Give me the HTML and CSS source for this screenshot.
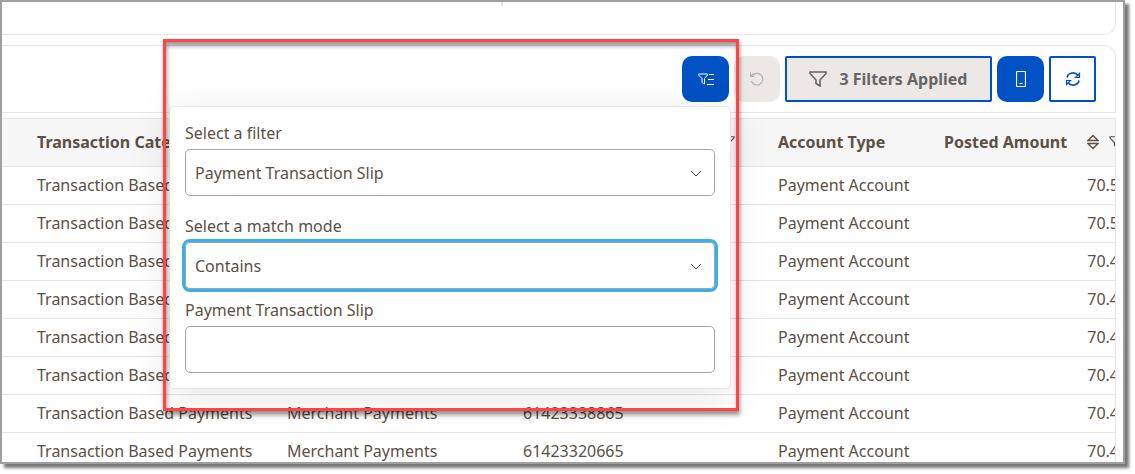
FILE: index.html
```
<!DOCTYPE html>
<html lang="en">
<head>
    <meta charset="UTF-8">
    <meta name="viewport" content="width=device-width, initial-scale=1.0">
    <title>Transactions</title>
    <link rel="stylesheet" href="styles.css">
</head>
<body>
    <svg class="sprite" aria-hidden="true">
        <symbol id="funnel" viewBox="0 0 18 16">
            <path d="M1 1h16v1.500L11 9v6L7 12.500V9L1 2.500z" stroke-width="1.6"/>
        </symbol>
        <symbol id="chevron" viewBox="0 0 12 7">
            <path d="M1 1l5 5 5-5"/>
        </symbol>
    </svg>

    <div class="window">
        <section class="card summary">
            <div class="summary-part"></div>
        </section>

        <section class="card toolbar">
            <div class="filter-menu">
                <button class="btn btn-primary" type="button" aria-label="Filter list">
                    <svg class="icon" width="16" height="12" viewBox="0 0 16 12">
                        <path d="M.5 1h9v1L6.500 5.500v5.500L4 9.500v-4L.5 2z"/>
                        <path d="M11 1.500h5M10 6.500h6M9 11.500h7"/>
                    </svg>
                </button>

                <form class="popup">
                    <label for="filter">Select a filter</label>
                    <div class="select">
                        <select id="filter">
                            <option>Payment Transaction Slip</option>
                        </select>
                        <svg class="icon chevron"><use href="#chevron"/></svg>
                    </div>

                    <label class="mode-label" for="mode">Select a match mode</label>
                    <div class="select">
                        <select id="mode" class="active">
                            <option>Contains</option>
                        </select>
                        <svg class="icon chevron"><use href="#chevron"/></svg>
                    </div>

                    <label class="slip-label" for="slip">Payment Transaction Slip</label>
                    <input id="slip" type="text">
                </form>

                <div class="highlight"></div>
            </div>

            <button class="btn btn-disabled" type="button" aria-label="Undo" disabled>
                <svg class="icon" width="14" height="14" viewBox="0 0 14 14">
                    <path d="M2.500 3.500A5.800 5.800 0 1 1 1.500 9" stroke-width="1.2"/>
                    <path d="M.5.500v4h4M.5 4.500l3-3" stroke-width="1.2"/>
                </svg>
            </button>

            <button class="btn btn-filters" type="button">
                <svg class="icon funnel-big"><use href="#funnel"/></svg>
                3 Filters Applied
            </button>

            <button class="btn btn-primary" type="button" aria-label="Mobile view">
                <svg class="icon" width="10" height="16" viewBox="0 0 10 16">
                    <rect x=".5" y=".5" width="9" height="15" rx="1" stroke-width="1.2"/>
                    <path d="M3.500 12.500h3"/>
                </svg>
            </button>

            <button class="btn btn-outline" type="button" aria-label="Refresh">
                <svg class="icon" width="16" height="14" viewBox="0 0 16 14">
                    <path d="M2 5.500a6 5.500 0 0 1 11-2M14 8.500a6 5.500 0 0 1-11 2" stroke-width="1.600"/>
                    <path d="M14.500 1.500v4H10.500zM1.500 12.500v-4H5.500z" stroke-width="1.200"/>
                </svg>
            </button>
        </section>

        <section class="card table-card">
            <table>
                <colgroup>
                    <col class="col-category">
                    <col class="col-type">
                    <col class="col-slip">
                    <col class="col-account">
                    <col class="col-amount">
                </colgroup>
                <thead>
                    <tr>
                        <th>Transaction Category</th>
                        <th></th>
                        <th><div class="head head-end"><svg class="icon funnel"><use href="#funnel"/></svg></div></th>
                        <th>Account Type</th>
                        <th>
                            <div class="head">
                                Posted Amount
                                <svg class="icon sort" width="12" height="16" viewBox="0 0 12 16">
                                    <path d="M6 1.500L1 6.500h10zM6 14.500L1 9.500h10z" stroke-width="1.400"/>
                                </svg>
                                <svg class="icon funnel"><use href="#funnel"/></svg>
                            </div>
                        </th>
                    </tr>
                </thead>
                <tbody>
                    <tr><td>Transaction Based Payments</td><td></td><td></td><td>Payment Account</td><td>70.5</td></tr>
                    <tr><td>Transaction Based Payments</td><td></td><td></td><td>Payment Account</td><td>70.5</td></tr>
                    <tr><td>Transaction Based Payments</td><td></td><td></td><td>Payment Account</td><td>70.4</td></tr>
                    <tr><td>Transaction Based Payments</td><td></td><td></td><td>Payment Account</td><td>70.4</td></tr>
                    <tr><td>Transaction Based Payments</td><td></td><td></td><td>Payment Account</td><td>70.4</td></tr>
                    <tr><td>Transaction Based Payments</td><td></td><td></td><td>Payment Account</td><td>70.4</td></tr>
                    <tr><td>Transaction Based Payments</td><td>Merchant Payments</td><td>61423338865</td><td>Payment Account</td><td>70.4</td></tr>
                    <tr><td>Transaction Based Payments</td><td>Merchant Payments</td><td>61423320665</td><td>Payment Account</td><td>70.4</td></tr>
                </tbody>
            </table>
        </section>
    </div>
</body>
</html>
```
FILE: styles.css
```
* {
    box-sizing: border-box;
}

body {
    margin: 0;
    padding-bottom: 10px;
    background-color: #fff;
    color: #5b5045;
    font-family: "Noto Sans", sans-serif;
    font-size: 16px;
    line-height: 20px;
}

button, select, input {
    font: inherit;
    color: inherit;
}

.sprite {
    display: none;
}

.icon {
    flex: none;
    fill: none;
    stroke: currentColor;
    stroke-width: 1;
}

.window {
    height: calc(100vh - 10px);
    margin-right: 10px;
    padding-right: 7px;
    overflow: hidden;
    border: 2px solid #a0a0a0;
    box-shadow: 4px 4px 3px #777;
}

.card {
    border: 1px solid #e8e6e4;
    border-left: none;
}

.summary {
    height: 33px;
    border-top: none;
    border-radius: 0 0 12px 0;
}

.summary-part {
    width: 45%;
    height: 4px;
    border-right: 2px solid #e8e6e4;
}

/* toolbar */
.toolbar {
    display: flex;
    justify-content: flex-end;
    gap: 5px;
    margin-top: 10px;
    padding: 10px 19px;
    border-radius: 0 12px 0 0;
}

.btn {
    display: flex;
    align-items: center;
    justify-content: center;
    width: 47px;
    height: 46px;
    padding: 0;
    border: none;
    border-radius: 10px;
}

.btn-primary {
    background-color: #0051c4;
    color: #fff;
}

.btn-disabled {
    width: 46px;
    background-color: #ece8e5;
    color: #b5b2b0;
}

.btn-filters {
    gap: 12px;
    width: 207px;
    border: 2px solid #0051c4;
    border-radius: 2px;
    background-color: #ece8e5;
    color: #666;
    font-weight: bold;
}

.btn-outline {
    border: 2px solid #0051c4;
    border-radius: 2px;
    background-color: #fff;
    color: #0051c4;
}

.funnel-big {
    width: 18px;
    height: 16px;
}

/* filter popup */
.filter-menu {
    position: relative;
}

.popup {
    position: absolute;
    z-index: 2;
    top: calc(100% + 4px);
    right: -2px;
    width: 562px;
    padding: 16px 15px 15px;
    border: 1px solid #e8e6e4;
    border-radius: 5px;
    background-color: #fff;
    box-shadow: 0 8px 40px rgba(0, 0, 0, 0.1);
}

.popup label {
    display: block;
    margin-bottom: 6px;
}

.popup .mode-label {
    margin-top: 20px;
}

.popup .slip-label {
    margin-top: 11px;
}

.popup select,
.popup input {
    display: block;
    width: 100%;
    height: 47px;
    padding: 0 9px;
    border: 1px solid #a3a3a3;
    border-radius: 5px;
    background-color: #fff;
    appearance: none;
}

.popup select.active {
    outline: 3px solid #36b0e8;
}

.select {
    position: relative;
}

.chevron {
    position: absolute;
    top: 21px;
    right: 13px;
    width: 12px;
    height: 7px;
    pointer-events: none;
}

.highlight {
    position: absolute;
    z-index: 3;
    top: -17px;
    right: -10px;
    width: 576px;
    height: 372px;
    border: 3px solid #ff4444;
    box-shadow: 1px 4px 4px rgba(0, 0, 0, 0.4), inset 1px 4px 4px rgba(0, 0, 0, 0.4);
    pointer-events: none;
}

/* table */
.table-card {
    margin-top: 5px;
    overflow: hidden;
}

table {
    width: 1144px;
    table-layout: fixed;
    border-collapse: separate;
    border-spacing: 0;
}

.col-category {
    width: 269px;
}

.col-type {
    width: 236px;
}

.col-slip {
    width: 255px;
}

.col-account {
    width: 166px;
}

.col-amount {
    width: 218px;
}

th, td {
    height: 38px;
    padding: 0 27px 1px 16px;
    border-bottom: 1px solid #e8e6e4;
    text-align: left;
    white-space: nowrap;
}

th {
    height: 48px;
    background-color: #f6f6f6;
}

th:nth-child(4) {
    padding-right: 0;
}

th:first-child,
td:first-child {
    padding-left: 35px;
    padding-right: 0;
}

td:last-child {
    text-align: right;
}

.head {
    display: flex;
    align-items: center;
    gap: 10px;
}

.head-end {
    justify-content: flex-end;
}

.sort {
    margin-left: 10px;
}

.funnel {
    width: 14px;
    height: 12px;
}
```
